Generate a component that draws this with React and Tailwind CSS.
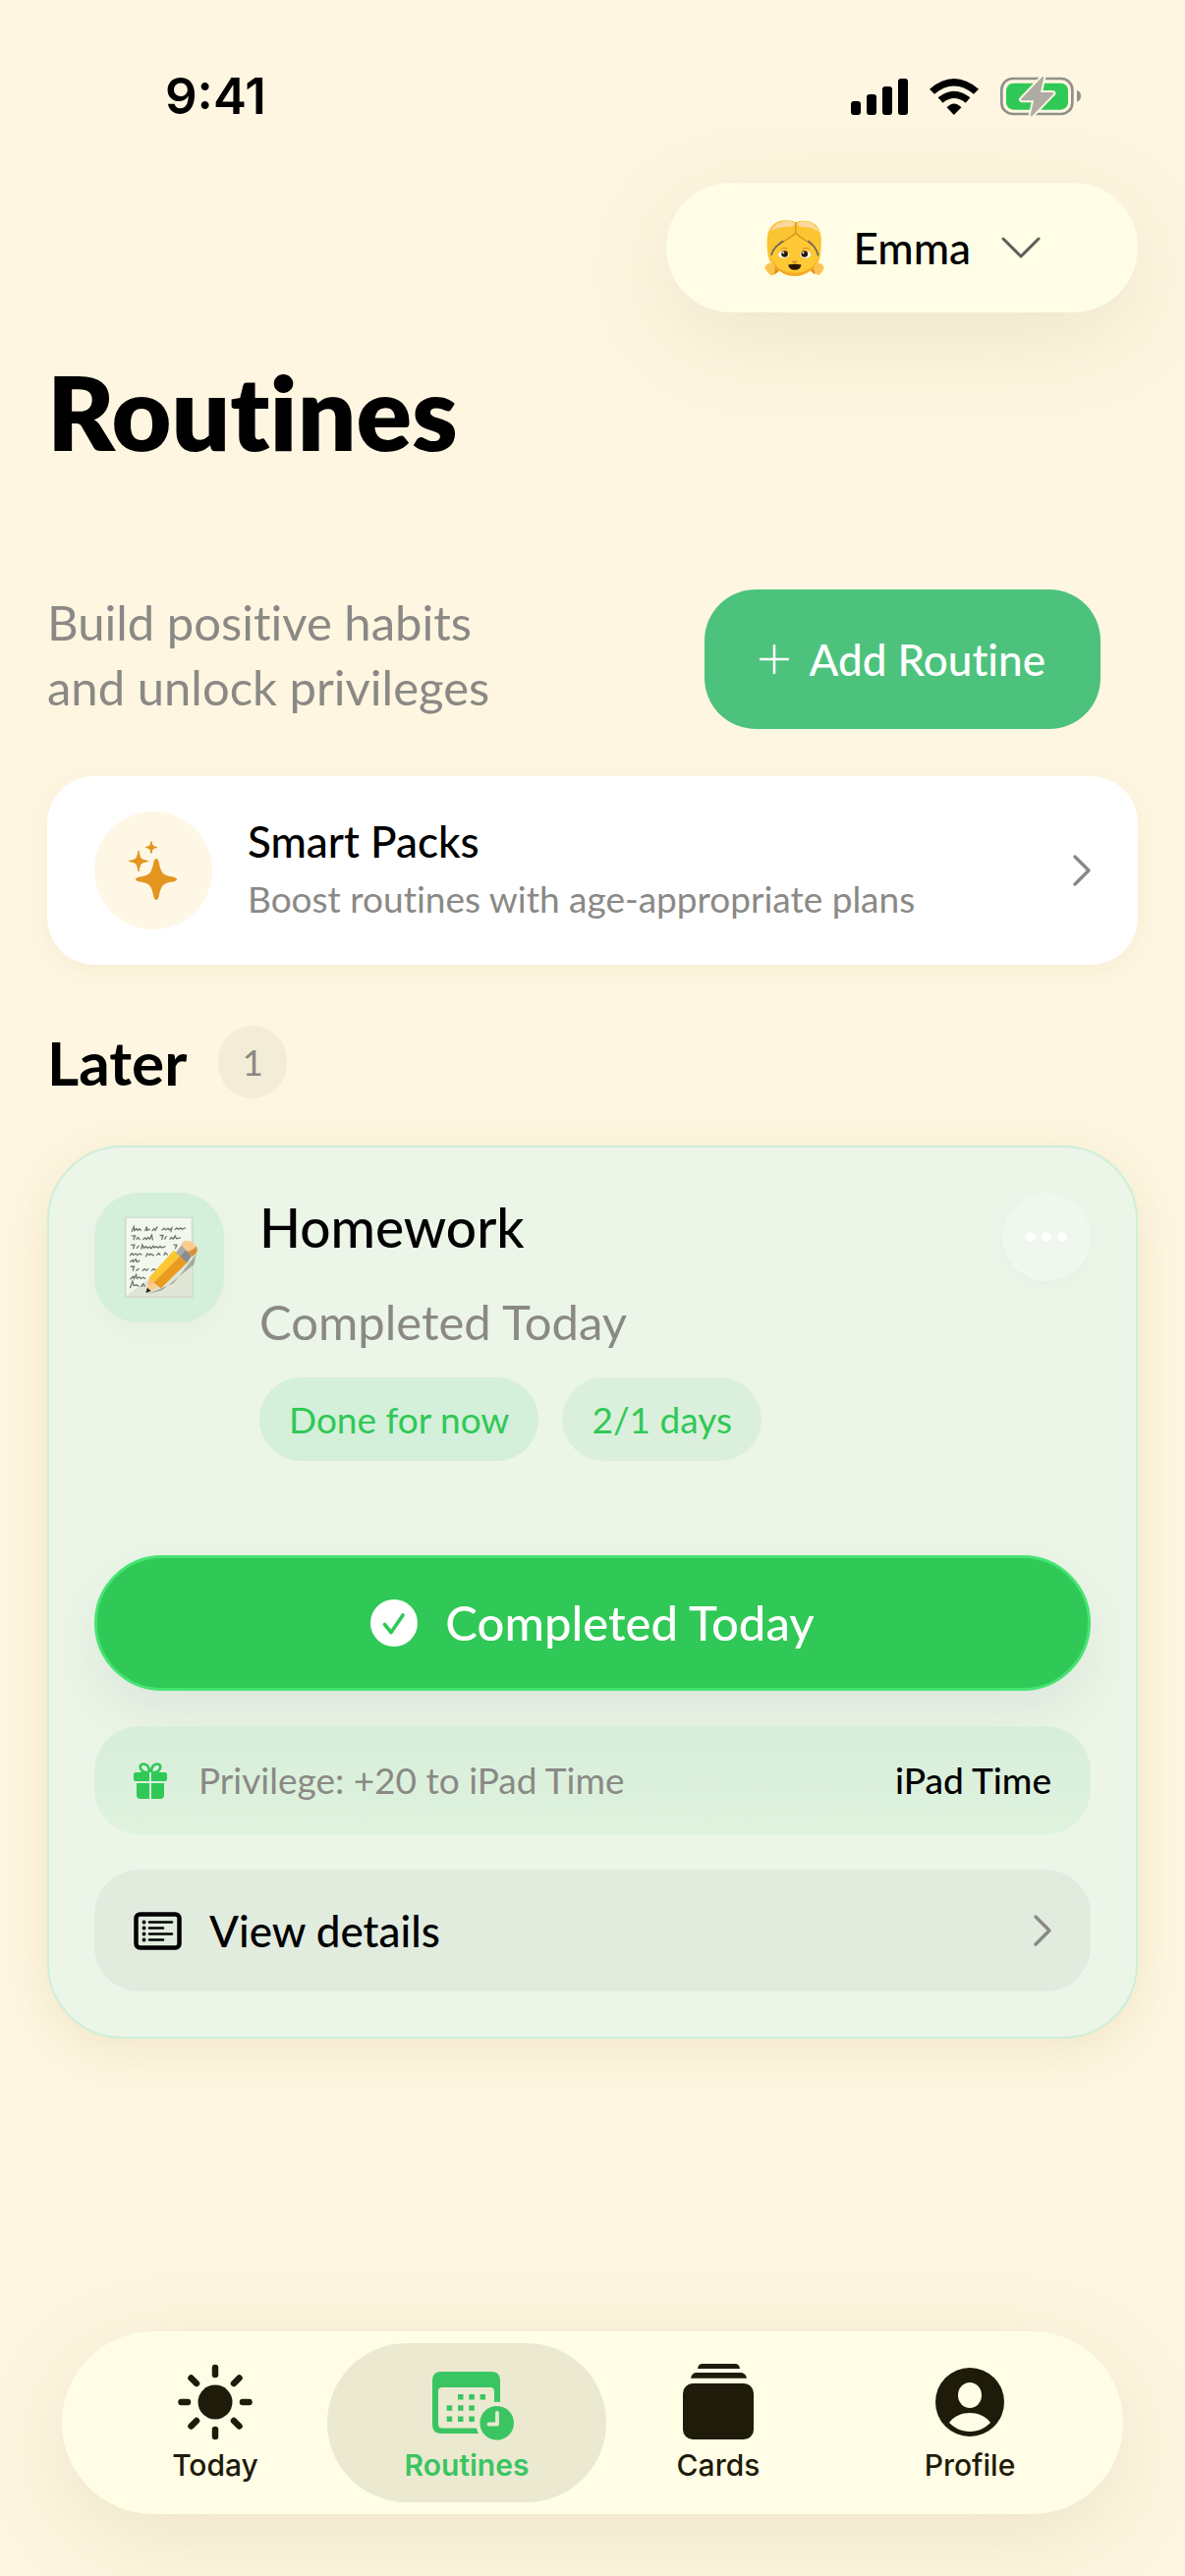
import React, { useState } from 'react';

const SignalIcon = () => (
    <svg viewBox="75 57 174 111" className="h-[37px] w-[58px]" aria-hidden="true">
        <rect x="75" y="126" width="30" height="42" rx="9" />
        <rect x="123" y="105" width="30" height="63" rx="9" />
        <rect x="171" y="81" width="30" height="87" rx="9" />
        <rect x="219" y="57" width="30" height="111" rx="9" />
    </svg>
);

const WifiIcon = () => (
    <svg viewBox="316 57 151 111" className="h-[37px] w-[50px]" aria-hidden="true">
        <path d="M316 89Q391 25 467 89L452 104Q391 54 331 104Z" />
        <path d="M342 115Q391 75 441 115L427 131Q391 103 357 131Z" />
        <path d="M369 145Q391 122 414 145L391 168Z" />
    </svg>
);

const BatteryIcon = () => (
    <svg viewBox="534 49 249 129" className="h-[43px] w-[83px]" aria-hidden="true">
        <rect x="538" y="58" width="216" height="108" rx="34" fill="none" stroke="#908f89" strokeWidth="8" />
        <rect x="552" y="72" width="189" height="81" rx="22" fill="#30c856" />
        <path d="M768 94Q780 98 780 111T768 129Z" fill="#908f89" />
        <path
            d="M664 55L600 122H640L629 170L694 103H653Z"
            fill="#aeada3"
            stroke="#fff6e1"
            strokeWidth="18"
            strokeLinejoin="round"
            paintOrder="stroke"
        />
        <path d="M664 55L600 122H640L629 170L694 103H653Z" fill="#aeada3" stroke="#aeada3" strokeWidth="6" strokeLinejoin="round" />
    </svg>
);

const GirlEmoji = () => (
    <svg viewBox="34 34 184 176" className="h-[59px] w-[61px]" aria-hidden="true">
        <path d="M62 166Q44 166 35 180Q38 194 56 207Q74 200 80 180Z" fill="#f9c550" />
        <path d="M190 166Q208 166 217 180Q214 196 200 206Q182 198 174 180Z" fill="#f9c550" />
        <path d="M60 166Q72 178 62 204Q78 198 84 182Z" fill="#e39420" />
        <path d="M192 166Q180 178 190 203Q176 196 170 182Z" fill="#e39420" />
        <path d="M42 110C38 60 66 36 100 37Q122 37 130 44Q140 37 158 38C196 40 212 68 208 112Q208 150 198 168H54Q42 150 42 110Z" fill="#fbc433" />
        <path d="M52 70Q72 38 104 39Q122 39 128 48Q120 58 104 57Q76 56 52 70Z" fill="#fad9a0" />
        <path d="M133 48Q140 39 158 40Q188 42 204 74Q182 58 158 57Q142 58 133 48Z" fill="#fad9a0" />
        <path d="M130 78C106 100 62 112 56 150C62 190 98 208 126 208C156 208 194 190 198 150C192 116 154 100 130 78Z" fill="#ffc936" />
        <path d="M56 152C64 190 98 208 126 208C156 208 190 190 198 152C188 182 158 198 126 198C96 198 66 182 56 152Z" fill="#f4ab28" />
        <path d="M130 42V76C114 92 92 100 78 112M130 76C148 94 166 100 178 112" fill="none" stroke="#dd8f22" strokeWidth="4" />
        <path d="M55 144Q60 120 92 100M168 100Q194 120 199 146" fill="none" stroke="#6b6658" strokeWidth="5" />
        <path d="M84 125Q93 119 104 124M150 124Q162 119 172 125" fill="none" stroke="#d08a22" strokeWidth="3" />
        <ellipse cx="93" cy="142" rx="16" ry="11" fill="#fff" />
        <ellipse cx="160" cy="142" rx="16" ry="11" fill="#fff" />
        <circle cx="96" cy="140" r="10" fill="#2c1a08" />
        <circle cx="157" cy="140" r="10" fill="#2c1a08" />
        <circle cx="92" cy="136" r="3" fill="#fff" />
        <circle cx="153" cy="136" r="3" fill="#fff" />
        <path d="M120 162Q127 168 134 162" fill="none" stroke="#d9821c" strokeWidth="5" />
        <path d="M107 173Q127 169 147 173Q144 189 127 189T107 173Z" fill="#2a1606" />
    </svg>
);

const MemoEmoji = () => (
    <svg viewBox="102 92 230 254" className="h-[84px] w-[76px] overflow-visible" aria-hidden="true">
        <rect x="110" y="94" width="212" height="250" fill="#d5dccb" />
        <rect x="116" y="98" width="200" height="238" fill="#f3f8ef" />
        <path d="M116 336L316 190V336Z" fill="#dfe6d6" />
        <g fill="none" stroke="#6f756c" strokeWidth="4" strokeLinecap="round">
            <path d="M133 138l6-14 2 12 6-6 4 5 5-4 5 4M174 136l5-12 1 11 8-3M196 136l5-6 4 5 6-10M226 134l6-5 5 5 7-5 4 5 8-6-3 11M266 133l6-5 5 4 6-4 5 4 9-4" />
            <path d="M133 152h10l-5 12M147 163l4-6 6 6M168 163l5-5 5 5 5-6 5 5 6-12 3 14M220 151h9l-4 12M234 162l5-8M250 162l5-5 5 5 6-10 4 9 12-3" />
            <path d="M131 180h10l-4 11M148 190l6-7M162 192l3-12 5 10 6-5 5 5 6-4 5 5 7-8 3 6 6-4 6 4 6-5 5 5 10-4M262 180h9l-4 11" />
            <path d="M128 212l5-6 5 5 7-4 5 5 7-5 6 3M176 216l5-9 6 4 5-3 9 5M210 211l6-5 4 5M232 211l4-7 6 6" />
            <path d="M128 232l7-5 2 5 8-8 3 8 8-3" />
            <path d="M130 247h10l-4 12M146 259l8-5M166 259l6-5 5 5 6-5M194 259l6-5 7 4" />
            <path d="M129 285l8-8 3 7 6-12 3 12 7-5 5 5 7-4 6 4" />
            <path d="M128 312l7-20 4 14 8-3 6 4M162 308l6-8 4 7" />
        </g>
        <path d="M180 332L262 298L330 210L334 196L324 240L226 320Z" fill="#6b6f63" opacity="0.5" />
        <path d="M176 328L188 280L214 312Z" fill="#f8cf90" />
        <path d="M176 328L180 312L192 322Z" fill="#26221c" />
        <path d="M186 280L262 196L282 214L200 296Z" fill="#fdc731" />
        <path d="M200 296L282 214L302 236L222 314Z" fill="#e99b1f" />
        <path d="M186 280L200 296L193 304L181 302Z" fill="#f6c27a" />
        <path d="M268 204L286 180L318 212L302 236Z" fill="#a9aaa8" />
        <path d="M282 214L302 194L318 212L302 236Z" fill="#8b8c8a" />
        <path d="M286 182C286 166 304 162 322 174C338 188 338 202 318 216Z" fill="#f9cb90" />
        <path d="M304 200C320 198 330 186 332 184C338 198 332 208 318 216Z" fill="#d79042" />
    </svg>
);

const SparklesIcon = () => (
    <svg viewBox="126 856 60 62" className="h-[62px] w-[60px]" fill="#e3951f" aria-hidden="true">
        <path d="M159 875Q161 875 162 880C164 890 166 892 176 893.500Q180 894.500 180 896T176 898.500C166 900 164 902 162 912Q161 917 159 917T156 912C154 902 152 900 142 898.500Q138 897.500 138 896T142 893.500C152 892 154 890 156 880Q157 875 159 875Z" />
        <path d="M141 867C142.500 875 143 876 151 877.500C143 879 142.500 880 141 888C139.500 880 139 879 131 877.500C139 876 139.500 875 141 867Z" stroke="#e3951f" strokeLinejoin="round" />
        <path d="M154 857.500C155 862 155.500 862.500 160 863.500C155.500 864.500 155 865 154 869.500C153 865 152.500 864.500 148 863.500C152.500 862.500 153 862 154 857.500Z" stroke="#e3951f" strokeLinejoin="round" />
    </svg>
);

const ChevronRight = () => (
    <svg viewBox="0 0 18 32" className="h-8 w-[18px]" fill="none" stroke="#8a8985" strokeWidth="3.400" strokeLinecap="round" strokeLinejoin="round" aria-hidden="true">
        <path d="M2 2L16 16L2 30" />
    </svg>
);

const GiftIcon = () => (
    <svg viewBox="0 0 34 37" className="h-[37px] w-[34px]" fill="#30c856" aria-hidden="true">
        <path d="M16 10C6 11 4 1 10.500 1.500C15 2 16 6 16 10M18 10C28 11 30 1 23.500 1.500C19 2 18 6 18 10" fill="none" stroke="#30c856" strokeWidth="2.600" />
        <path d="M2 10H16V19H2Q0 19 0 17V12Q0 10 2 10ZM18 10H32Q34 10 34 12V17Q34 19 32 19H18Z" />
        <path d="M3 21H16V37H7Q3 37 3 33ZM18 21H31V33Q31 37 27 37H18Z" />
    </svg>
);

const ListIcon = () => (
    <svg viewBox="0 0 49 39" className="h-[39px] w-[49px]" fill="none" stroke="#000" aria-hidden="true">
        <rect x="2.500" y="2.500" width="44" height="34" rx="4" strokeWidth="4.500" />
        <path d="M16 10.500H39M16 16.500H30M16 22.500H39M16 28.500H30" strokeWidth="2.600" strokeLinecap="round" />
        <path d="M10.500 10.500H10.600M10.500 16.500H10.600M10.500 22.500H10.600M10.500 28.500H10.600" strokeWidth="3.800" strokeLinecap="round" />
    </svg>
);

const CheckCircle = () => (
    <svg viewBox="0 0 48 48" className="size-12" aria-hidden="true">
        <circle cx="24" cy="24" r="24" fill="#fff" />
        <path d="M14.500 25.500L21 33.500L33 16" fill="none" stroke="#30c856" strokeWidth="3.600" strokeLinecap="round" strokeLinejoin="round" />
    </svg>
);

const TodayIcon = () => (
    <svg viewBox="0 0 80 80" className="size-20" aria-hidden="true">
        <circle cx="40" cy="40" r="17.500" fill="currentColor" />
        <path
            d="M40 5V12M40 68V75M5.500 40H12M68 40H74.500M15.500 15.500L21 21M59 59L64.500 64.500M64.500 15.500L59 21M21 59L15.500 64.500"
            stroke="currentColor"
            strokeWidth="6.500"
            strokeLinecap="round"
        />
    </svg>
);

// the clock hangs out to the right, so the box is padded on the left
const RoutinesIcon = () => (
    <svg viewBox="-12 -9 95 80" className="h-20 w-[95px]" aria-hidden="true">
        <path fillRule="evenodd" fill="currentColor" d="M9 0H60Q69 0 69 9V54Q69 63 60 63H9Q0 63 0 54V9Q0 0 9 0ZM10 16Q6 16 6 20V53Q6 57.500 10 57.500H63V20Q63 16 59 16Z" />
        <circle cx="65.700" cy="52.300" r="21.500" fill="#ece9d1" />
        <path
            fill="currentColor"
            d="M26 23h5.500v5.500h-5.500ZM37.300 23h5.500v5.500h-5.500ZM48.600 23h5.500v5.500h-5.500ZM14.700 34.200h5.500v5.500h-5.500ZM26 34.200h5.500v5.500h-5.500ZM37.300 34.200h5.500v5.500h-5.500ZM14.700 45.400h5.500v5.500h-5.500ZM26 45.400h5.500v5.500h-5.500ZM37.300 45.400h5.500v5.500h-5.500Z"
        />
        <circle cx="65.700" cy="52.300" r="17.300" fill="currentColor" />
        <path d="M66 42V53.500H57.500" fill="none" stroke="#ece9d1" strokeWidth="3.800" strokeLinecap="round" strokeLinejoin="round" />
    </svg>
);

const CardsIcon = () => (
    <svg viewBox="0 -1 72 80" className="h-20 w-[72px]" fill="currentColor" aria-hidden="true">
        <rect y="20" width="72" height="57" rx="10" />
        <path d="M8 14.700Q9 9 14 9H58Q64 9 65 14.700Z" />
        <path d="M15 5Q15.500 0 20 0H53Q57.500 0 58 5Z" />
    </svg>
);

const ProfileIcon = () => (
    <svg viewBox="0 -5 70 80" className="h-20 w-[70px]" aria-hidden="true">
        <circle cx="35" cy="35" r="35" fill="currentColor" />
        <ellipse cx="35" cy="28" rx="12" ry="13" fill="#fffde6" />
        <path d="M14 56C19 49 27 46 35 46S51 49 56 56C51 61 44 65 35 65S19 61 14 56Z" fill="#fffde6" />
    </svg>
);

const tabs = [
    { name: 'Today', Icon: TodayIcon },
    { name: 'Routines', Icon: RoutinesIcon },
    { name: 'Cards', Icon: CardsIcon },
    { name: 'Profile', Icon: ProfileIcon },
];

const StatusBar = () => (
    <div className="flex items-center justify-between pt-[68px] pr-[105px] pb-[58px] pl-[168px]">
        <span className="font-[Inter] text-[51px] leading-[60px] font-semibold">9:41</span>
        <div className="flex items-center gap-[22px]">
            <SignalIcon />
            <WifiIcon />
            <BatteryIcon />
        </div>
    </div>
);

const ChildPicker = () => (
    <label className="flex h-[132px] w-[480px] items-center justify-center gap-[30px] self-end rounded-full bg-[#fffde6] shadow-[0_24px_100px_rgba(70,80,0,0.11)]">
        <GirlEmoji />
        <select aria-label="Child" className="appearance-none bg-transparent text-[44px] leading-[58px] font-medium outline-none">
            <option>Emma</option>
        </select>
        <svg viewBox="0 0 40 22" className="h-[22px] w-10" fill="none" stroke="#5f5e58" strokeWidth="3" strokeLinecap="round" strokeLinejoin="round" aria-hidden="true">
            <path d="M2 2L20 20L38 2" />
        </svg>
    </label>
);

const SmartPacks = () => (
    <button className="mt-12 flex h-[192px] items-center rounded-[48px] bg-white px-12 text-left shadow-[0_6px_24px_rgba(90,80,20,0.05)]">
        <span className="flex size-[120px] shrink-0 items-center justify-center rounded-full bg-[#fff7e6]">
            <SparklesIcon />
        </span>
        <span className="ml-9 flex flex-1 flex-col">
            <span className="text-[44px] leading-[58px] font-medium">Smart Packs</span>
            <span className="text-[37px] leading-[60px] text-[#8a8985]">Boost routines with age-appropriate plans</span>
        </span>
        <ChevronRight />
    </button>
);

const RoutineCard = () => (
    <article className="mt-12 flex flex-col rounded-[76px] border-2 border-[#cdefd8] bg-[#ebf5e8] p-[46px] shadow-[0_12px_48px_rgba(100,100,0,0.11)]">
        <div className="flex items-start">
            <div className="flex size-[132px] shrink-0 items-center justify-center rounded-[46px] bg-[#d4efda] shadow-[0_12px_24px_rgba(60,80,60,0.03)]">
                <MemoEmoji />
            </div>
            <div className="ml-9 flex-1">
                <h3 className="text-[55px] leading-[70px] font-medium">Homework</h3>
                <p className="mt-7 text-[49px] leading-[66px] text-[#8a8985]">Completed Today</p>
                <div className="mt-6 flex gap-6 text-[37px] leading-[85px] text-[#30c856]">
                    <span className="rounded-full bg-[#d4efda] px-[30px]">Done for now</span>
                    <span className="rounded-full bg-[#dbf0dc] px-[30px]">2/1 days</span>
                </div>
            </div>
            <button aria-label="More options" className="flex size-[90px] items-center justify-center rounded-full bg-[#f0f7ee] shadow-[0_8px_24px_rgba(60,80,60,0.02)]">
                <svg viewBox="0 0 42 10" className="h-[10px] w-[42px]" fill="#fff" aria-hidden="true">
                    <circle cx="5" cy="5" r="4.800" />
                    <circle cx="21" cy="5" r="4.800" />
                    <circle cx="37" cy="5" r="4.800" />
                </svg>
            </button>
        </div>
        <button className="mt-24 flex h-[138px] items-center justify-center gap-7 rounded-[69px] border-[3px] border-[#45e472] bg-[#30c856] text-[49px] font-medium text-white shadow-[0_24px_60px_rgba(60,60,60,0.08)]">
            <CheckCircle />
            Completed Today
        </button>
        <div className="mt-9 flex h-[110px] items-center rounded-[46px] bg-linear-to-b from-[#d7eeda] to-[#dff3de] px-10 text-[37px]">
            <GiftIcon />
            <span className="ml-8 flex-1 text-[#8a8985]">Privilege: +20 to iPad Time</span>
            <span className="font-medium">iPad Time</span>
        </div>
        <button className="mt-9 flex h-[124px] items-center rounded-[46px] bg-[#e1ecdf] px-10 text-left text-[44px] font-medium">
            <ListIcon />
            <span className="ml-7 flex-1">View details</span>
            <ChevronRight />
        </button>
    </article>
);

const TabBar = ({ active, onSelect }) => (
    <nav className="mx-[63px] mt-auto mb-[63px] flex rounded-full bg-[#fffde6] px-7 py-3 font-[Inter] shadow-[0_24px_100px_rgba(70,80,0,0.11)]">
        {tabs.map(({ name, Icon }) => (
            <div key={name} className="flex flex-1">
                <button
                    onClick={() => onSelect(name)}
                    className={
                        name === active
                            ? 'relative -mx-3.5 flex h-[162px] flex-1 flex-col items-center justify-center gap-1.5 rounded-full bg-[#ece9d1] text-[30px] leading-9 font-semibold text-[#3ac562]'
                            : 'flex h-[162px] flex-1 flex-col items-center justify-center gap-1.5 text-[30px] leading-9 font-medium text-[#1e1b0a]'
                    }
                >
                    <Icon />
                    {name}
                </button>
            </div>
        ))}
    </nav>
);

const App = () => {
    const [active, setActive] = useState('Routines');

    return (
        <div className="flex min-h-screen flex-col bg-[#fff6e1] font-[Lato,sans-serif] text-black [font-variant-ligatures:no-common-ligatures]">
            <StatusBar />
            <main className="flex flex-col px-12 pb-24">
                <ChildPicker />
                <h1 className="mt-10 text-[105px] leading-[120px] font-extrabold">Routines</h1>
                <div className="mt-[122px] flex items-start justify-between pr-[38px]">
                    <p className="text-[49px] leading-[66px] text-[#8a8985]">
                        Build positive habits
                        <br />
                        and unlock privileges
                    </p>
                    <button className="flex h-[142px] items-center gap-5 rounded-[52px] bg-[#4dc27c] px-14 text-[44px] font-medium text-white">
                        <svg viewBox="0 0 30 30" className="size-[30px]" stroke="#fff" strokeWidth="2.600" strokeLinecap="round" aria-hidden="true">
                            <path d="M15 1V29M1 15H29" />
                        </svg>
                        Add Routine
                    </button>
                </div>
                <SmartPacks />
                <div className="mt-[62px] flex items-center gap-8">
                    <h2 className="text-[62px] leading-[74px] font-bold">Later</h2>
                    <span className="w-[70px] rounded-full bg-[#f3edd7] text-center text-[37px] leading-[74px] text-[#8a8985]">1</span>
                </div>
                <RoutineCard />
            </main>
            <TabBar active={active} onSelect={setActive} />
        </div>
    );
};

export default App;
